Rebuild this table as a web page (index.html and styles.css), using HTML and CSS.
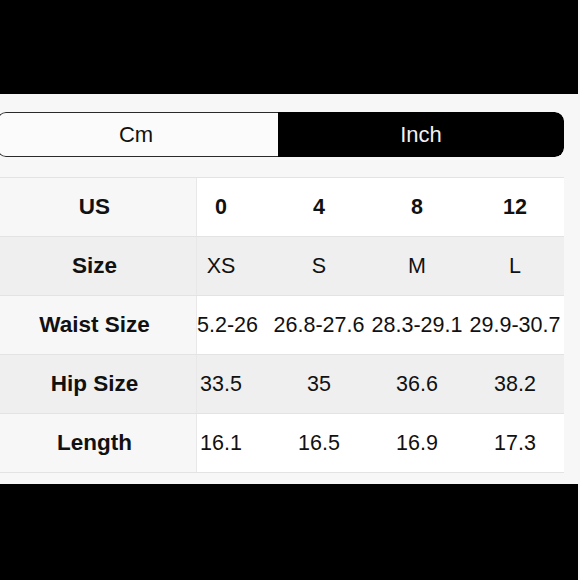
FILE: index.html
```html
<!DOCTYPE html>
<html>
<head>
<meta charset="utf-8">
<link rel="stylesheet" href="styles.css">
</head>
<body>
<div class="band band-top"></div>
<main class="main">
  <div class="toggle">
    <div class="seg seg-cm">Cm</div>
    <div class="seg seg-inch">Inch</div>
  </div>
  <div class="table">
    <div class="row row-light head">
      <div class="label">US</div>
      <div class="vals"><div class="track">
        <div class="cell">0</div><div class="cell">4</div><div class="cell">8</div><div class="cell">12</div>
      </div></div>
    </div>
    <div class="row row-grey">
      <div class="label">Size</div>
      <div class="vals"><div class="track">
        <div class="cell">XS</div><div class="cell">S</div><div class="cell">M</div><div class="cell">L</div>
      </div></div>
    </div>
    <div class="row row-light">
      <div class="label">Waist Size</div>
      <div class="vals"><div class="track">
        <div class="cell cell-start">5.2-26</div><div class="cell">26.8-27.6</div><div class="cell">28.3-29.1</div><div class="cell">29.9-30.7</div>
      </div></div>
    </div>
    <div class="row row-grey">
      <div class="label">Hip Size</div>
      <div class="vals"><div class="track">
        <div class="cell">33.5</div><div class="cell">35</div><div class="cell">36.6</div><div class="cell">38.2</div>
      </div></div>
    </div>
    <div class="row row-light">
      <div class="label">Length</div>
      <div class="vals"><div class="track">
        <div class="cell">16.1</div><div class="cell">16.5</div><div class="cell">16.9</div><div class="cell">17.3</div>
      </div></div>
    </div>
  </div>
</main>
<div class="band band-bottom"></div>
</body>
</html>
```

FILE: styles.css
```css
html, body {
  margin: 0;
  padding: 0;
  background: #f7f7f7;
  font-family: "Liberation Sans", Arial, sans-serif;
  color: #111;
  width: 580px;
  height: 580px;
  overflow: hidden;
}

.band {
  background: #000;
  margin-right: 2px;
}
.band-top { height: 94px; }
.band-bottom { height: 96px; }

.main {
  height: 390px;
  box-sizing: border-box;
  padding-top: 18px;
}

.toggle {
  display: flex;
  width: 567px;
  height: 45px;
  margin-left: -3px;
  border-radius: 9px;
  overflow: hidden;
  box-sizing: border-box;
}

.seg {
  display: flex;
  align-items: center;
  justify-content: center;
  font-size: 22px;
  box-sizing: border-box;
}

.seg-cm {
  width: 281px;
  background: #fbfbfb;
  border: 1.5px solid #2a2a2a;
  border-right: none;
  border-radius: 9px 0 0 9px;
  color: #111;
  padding-right: 4px;
}

.seg-inch {
  flex: 1;
  background: #000;
  color: #f2f2f2;
  border-radius: 0 9px 9px 0;
}

.table {
  margin-top: 20px;
  width: 564px;
  border-top: 1px solid #e3e3e3;
}

.row {
  display: flex;
  height: 58px;
  border-bottom: 1px solid #e3e3e3;
}

.row-grey { background: #efefef; }
.row-light { background: #f7f7f7; }
.row-light .vals { background: #fff; }

.label {
  width: 197px;
  flex: none;
  box-sizing: border-box;
  padding-right: 7px;
  display: flex;
  align-items: center;
  justify-content: center;
  font-weight: bold;
  font-size: 22.5px;
  border-right: 1px solid #e8e8e8;
}

.vals {
  flex: 1;
  overflow: hidden;
}

.track {
  display: flex;
  height: 100%;
  margin-left: -25px;
}

.cell {
  width: 98px;
  flex: none;
  display: flex;
  align-items: center;
  justify-content: center;
  white-space: nowrap;
  font-size: 21.5px;
}

.cell-start {
  justify-content: flex-start;
  padding-left: 25px;
  box-sizing: border-box;
}

.head .cell { font-weight: bold; }
```
